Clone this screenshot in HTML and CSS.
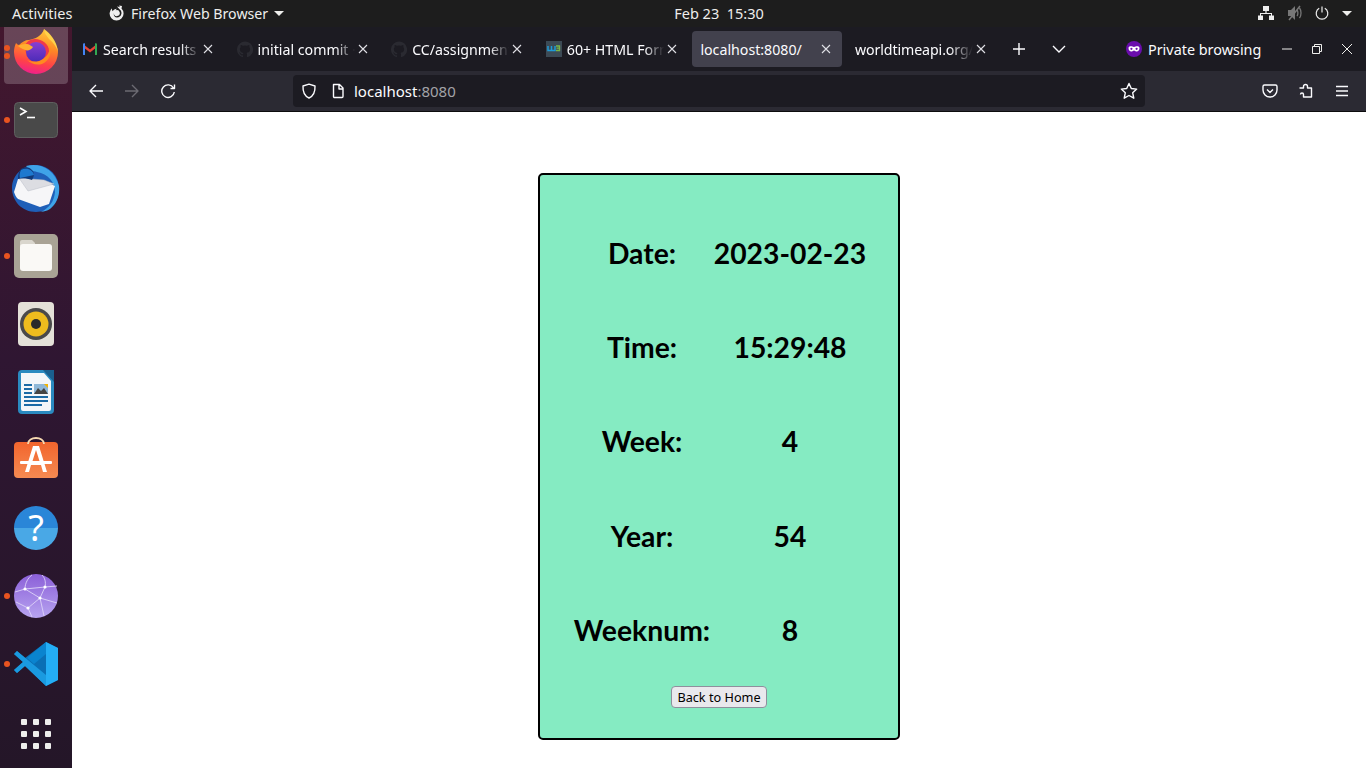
FILE: index.html
```html
<!DOCTYPE html>
<html lang="en">
<head>
<meta charset="utf-8">
<title>localhost:8080/</title>
<link rel="stylesheet" href="styles.css">
</head>
<body>
<div class="desktop">
  <header class="topbar">
    <span class="activities">Activities</span>
    <div class="appmenu">
      <svg class="app-icon" viewBox="0 0 16 16"><path fill="#eee" d="M8 1.500c1 0 2 .2 2.900.7L10 0.500l3 .5-.5 2.500A7 7 0 1 1 3 3.200C2.800 4.500 3 5.500 3.800 6.300 4.300 4.800 6 3.800 8 3.800c-.6.500-1.200 1-1.300 1.500a3 3 0 1 1-1.900 3C4.500 11 6 12.500 8 12.500a4.500 4.500 0 0 0 2.500-8.200"/></svg>
      <span class="appname">Firefox Web Browser</span>
      <i class="caret"></i>
    </div>
    <div class="clock">Feb 23&nbsp; 15:30</div>
    <div class="status">
      <svg class="st-net" viewBox="0 0 16 14"><path fill="#eee" d="M5 0h6v5H8.600v2H14v2.500h2V14h-5V9.500h2V8H3v1.500h2V14H0V9.500h2V7h5.400V5H5z"/></svg>
      <svg class="st-vol" viewBox="0 0 16 16"><path fill="#777" d="M1 5h3l4-4v14l-4-4H1z"/><path fill="none" stroke="#777" stroke-width="1.300" d="M10 5c1.200 1.500 1.200 4.500 0 6M12.500 3c2 2.500 2 7.500 0 10"/><path stroke="#777" stroke-width="1.500" d="M2 15L13 1"/></svg>
      <svg class="st-pow" viewBox="0 0 14 14"><path fill="none" stroke="#eee" stroke-width="1.200" d="M7 .5v6M4.200 2.300a5.800 5.800 0 1 0 5.600 0"/></svg>
      <i class="caret"></i>
    </div>
  </header>
  <div class="workspace">
    <nav class="dock">
      <div class="dock-item dock-first"><i class="dot dot-a"></i><i class="dot dot-b"></i>
        <svg class="ico" viewBox="0 0 48 48">
          <defs>
            <linearGradient id="fxa" x1="0.650" y1="0" x2="0.450" y2="1"><stop offset="0" stop-color="#ffc83a"/><stop offset="0.400" stop-color="#ff8a25"/><stop offset="0.750" stop-color="#ff4347"/><stop offset="1" stop-color="#f0208a"/></linearGradient>
            <linearGradient id="fxb" x1="0.500" y1="0" x2="0.500" y2="1"><stop offset="0" stop-color="#8a3fd0"/><stop offset="1" stop-color="#4a2bb8"/></linearGradient>
          </defs>
          <path fill="url(#fxa)" d="M32 1c1 4 4 7 7 10 4 4 7 8 7 13a22 22 0 1 1-44 0c0-3 .7-6 2-9 1 1 2 2 3 2 3-3 6-5 10-5 6-1 13-4 15-11z"/>
          <path fill="#ffd24a" d="M32 1c6 4 13 12 14 23-2-6-5-10-9-13-2-3-5-6-5-10z"/>
          <path fill="#f0384a" d="M23 11c-5 0-9 3-10 7 0 9 5 17 13 17 7 0 11-6 11-12 0-7-7-12-14-12z"/>
          <circle cx="24" cy="24" r="10" fill="url(#fxb)"/>
          <path fill="#ffb030" d="M6 18c3-1.500 7-2.500 11-1.500l4 2.500c-1.500 2-3.500 3.500-6 3.500-3-.5-6.500-2.500-9-4.500z"/>
          <path fill="#ff8a20" d="M38 18c2 8-1 15-8 18-6 1.500-11-.5-15-4 6 2.500 12 2 16-1 4-3 7-7 7-13z"/>
        </svg>
      </div>
      <div class="dock-item"><i class="dot"></i>
        <svg class="ico" viewBox="0 0 48 48"><rect x="2.500" y="6.500" width="43" height="35" rx="4" fill="#494949" stroke="#5f5f5f"/><path fill="none" stroke="#fff" stroke-width="1.600" d="M8 12l6 3.500L8 19"/><path stroke="#fff" stroke-width="1.600" d="M15 21.500h8"/></svg>
      </div>
      <div class="dock-item">
        <svg class="ico" viewBox="0 0 48 48">
          <path fill="#1f5fb8" d="M24 1a23.500 23.500 0 0 1 23 24c0 10-6 18-14 22l-9 1C10 48 0 37 0 24 0 11 11 1 24 1z"/>
          <path fill="#3fa3e8" d="M14 2c13-4 29 3 33 20 1 9-2 18-9 23-3 2-6 2-9 3 8-4 13-10 14-20 0-10-7-18-18-20-4-1-8-2-11-6z"/>
          <path fill="#f6f6f8" d="M6 15l26 2 11 5-6 18-9 3-22-8c-2-2-3-4-4-7z"/>
          <path fill="#dcdde2" stroke="#b9bcc6" stroke-width="0.500" d="M7 14l9 13 26-7-10-4z"/>
          <path fill="#123a78" d="M9 5c4-3 9-2 11 1 3 3 2 7 0 10-6-2-9-2-14-1 0-5 1-8 3-10z"/>
          <path fill="#1e79cf" d="M9 6c6-3 12 0 13 5L8 14c-1-3 0-6 1-8z"/>
        </svg>
      </div>
      <div class="dock-item"><i class="dot"></i>
        <svg class="ico" viewBox="0 0 48 48"><rect x="2" y="2" width="44" height="44" rx="5" fill="#a9a395"/><path fill="#d9d6cd" d="M8 10a2 2 0 0 1 2-2h10l3 3v3H8z"/><rect x="8" y="12" width="32" height="27" rx="3" fill="#faf9f6"/></svg>
      </div>
      <div class="dock-item">
        <svg class="ico" viewBox="0 0 48 48"><rect x="6" y="2" width="36" height="44" rx="4" fill="#e4e1d8"/><circle cx="24" cy="24" r="16" fill="#4a4a4a"/><circle cx="24" cy="24" r="12.500" fill="#eebc1e"/><circle cx="24" cy="24" r="5" fill="#2a2a2a"/></svg>
      </div>
      <div class="dock-item">
        <svg class="ico" viewBox="0 0 48 48"><path fill="#2a8ac0" d="M10 2h24l8 0v40a4 4 0 0 1-4 4H10a4 4 0 0 1-4-4V6a4 4 0 0 1 4-4z"/><path fill="#f3f6f9" d="M9 5h23l7 8v28a2 2 0 0 1-2 2H11a2 2 0 0 1-2-2z"/><path fill="#1a5f8e" d="M31 2h11v12z"/><path fill="#1a6aa6" d="M12 16h8v2h-8zM12 20h8v2h-8zM12 24h8v2h-8zM12 28h24v2H12zM12 32h24v2H12zM12 36h18v2H12z"/><rect x="22" y="16" width="14" height="10" fill="#8fb8d8"/><path fill="#444" d="M22 26l4-6 3 3 3-3 4 6z"/><path fill="#f4b400" d="M32 16h4v4z"/></svg>
      </div>
      <div class="dock-item">
        <svg class="ico" viewBox="0 0 48 48"><defs><linearGradient id="sw" x1="0" y1="0" x2="0" y2="1"><stop offset="0" stop-color="#f2652d"/><stop offset="1" stop-color="#f58a52"/></linearGradient></defs><rect x="2" y="6" width="44" height="36" rx="4" fill="url(#sw)"/><path fill="none" stroke="#f6d9b0" stroke-width="1.800" d="M16 8c0-8 16-8 16 0"/><path fill="#fff" d="M21 10h6l8 26h-4l-2-7H19l-2 7h-4zM24 14l-3.500 11h7z"/><rect x="8" y="25" width="32" height="3" rx="1" fill="#fff"/></svg>
      </div>
      <div class="dock-item">
        <div class="help">?</div>
      </div>
      <div class="dock-item"><i class="dot"></i>
        <svg class="ico" viewBox="0 0 48 48"><defs><linearGradient id="web" x1="0" y1="0" x2="0" y2="1"><stop offset="0" stop-color="#8b5fd8"/><stop offset="1" stop-color="#b7a4f0"/></linearGradient></defs><circle cx="24" cy="24" r="22" fill="url(#web)"/><path fill="none" stroke="#ddd2f7" stroke-width="0.900" d="M3 20l10-3 20-2 12-1M13 17l15 9 17 5M28 26L16 36l-12-6M16 36l4 9M13 17c0-6 3-11 7-14M33 15c1-5 0-9-3-12M33 15l-5 11 4 18"/><circle cx="13" cy="17" r="1.600" fill="#fff"/><circle cx="33" cy="15" r="1.600" fill="#fff"/><circle cx="28" cy="26" r="1.600" fill="#fff"/><circle cx="16" cy="36" r="1.600" fill="#fff"/></svg>
      </div>
      <div class="dock-item"><i class="dot"></i>
        <svg class="ico" viewBox="0 0 48 48"><path fill="#0a6fb5" d="M34 2L46 8v32l-12 6L13 26 5 33l-3-3 9-8-9-8 3-3 8 7z"/><path fill="#1a9ae0" d="M2 14l3-3 29 24v11L13 26l-8 7-3-3 9-8z"/><path fill="#0a84cf" d="M34 2v12L22 24l-7-6z"/><path fill="#24aef5" d="M34 2l12 6v32l-12 6z"/></svg>
      </div>
      <div class="dock-item">
        <div class="apps"><i></i><i></i><i></i><i></i><i></i><i></i><i></i><i></i><i></i></div>
      </div>
    </nav>
    <div class="browser">
      <div class="tabbar">
        <div class="tabs">
          <div class="tab">
            <svg class="fav" viewBox="0 0 16 16"><path fill="#ea4335" d="M1 3l7 5.500L15 3v3L8 11.500 1 6z"/><path fill="#4285f4" d="M1 3.500C1 2.500 2.200 2 3 2.600V14H1.500a.5.500 0 0 1-.5-.5z"/><path fill="#34a853" d="M15 3.500c0-1-1.200-1.500-2-.9V14h1.500a.5.500 0 0 0 .5-.5z"/></svg>
            <span class="label">Search results</span><svg class="x" viewBox="0 0 10 10"><path d="M1 1l8 8M9 1L1 9"/></svg>
          </div>
          <div class="tab">
            <svg class="fav" viewBox="0 0 16 16"><path fill="#2a2a31" d="M8 .5a8 8 0 0 0-2.500 15.600c.4 0 .5-.2.500-.4v-1.400c-2.200.5-2.700-1-2.700-1-.4-.9-.9-1.200-.9-1.200-.7-.5.100-.5.100-.5.800.1 1.200.8 1.200.8.700 1.200 1.900.9 2.300.7 0-.5.300-.9.500-1.100-1.800-.2-3.600-.9-3.600-3.900 0-.9.300-1.600.8-2.100-.1-.2-.4-1 .1-2.100 0 0 .7-.2 2.200.8a7.600 7.600 0 0 1 4 0c1.500-1 2.200-.8 2.200-.8.400 1.100.2 1.900.1 2.100.5.500.8 1.200.8 2.100 0 3-1.800 3.700-3.600 3.900.3.300.5.700.5 1.500v2.200c0 .2.100.5.600.4A8 8 0 0 0 8 .5z"/></svg>
            <span class="label">initial commit · </span><svg class="x" viewBox="0 0 10 10"><path d="M1 1l8 8M9 1L1 9"/></svg>
          </div>
          <div class="tab">
            <svg class="fav" viewBox="0 0 16 16"><path fill="#2a2a31" d="M8 .5a8 8 0 0 0-2.500 15.600c.4 0 .5-.2.500-.4v-1.400c-2.200.5-2.700-1-2.700-1-.4-.9-.9-1.200-.9-1.200-.7-.5.100-.5.100-.5.800.1 1.200.8 1.200.8.700 1.200 1.900.9 2.300.7 0-.5.300-.9.500-1.100-1.800-.2-3.600-.9-3.600-3.900 0-.9.300-1.600.8-2.100-.1-.2-.4-1 .1-2.100 0 0 .7-.2 2.200.8a7.600 7.600 0 0 1 4 0c1.500-1 2.200-.8 2.200-.8.400 1.100.2 1.900.1 2.100.5.500.8 1.200.8 2.100 0 3-1.800 3.700-3.600 3.900.3.300.5.700.5 1.500v2.200c0 .2.100.5.600.4A8 8 0 0 0 8 .5z"/></svg>
            <span class="label">CC/assignment</span><svg class="x" viewBox="0 0 10 10"><path d="M1 1l8 8M9 1L1 9"/></svg>
          </div>
          <div class="tab">
            <svg class="fav" viewBox="0 0 16 16"><rect width="16" height="16" fill="#3c4a55"/><path fill="none" stroke="#1e9bd7" stroke-width="1.500" d="M2 5v4.500h3.500V5M5.500 9.500H9V5"/><path fill="none" stroke="#7ab648" stroke-width="1.300" d="M10 5h3.500v4.500H10M10.500 7.200h3"/></svg>
            <span class="label">60+ HTML Forms</span><svg class="x" viewBox="0 0 10 10"><path d="M1 1l8 8M9 1L1 9"/></svg>
          </div>
          <div class="tab tab-active">
            <span class="label label-full">localhost:8080/</span><svg class="x" viewBox="0 0 10 10"><path d="M1 1l8 8M9 1L1 9"/></svg>
          </div>
          <div class="tab">
            <span class="label label-world">worldtimeapi.org/</span><svg class="x" viewBox="0 0 10 10"><path d="M1 1l8 8M9 1L1 9"/></svg>
          </div>
        </div>
        <svg class="tb-plus" viewBox="0 0 14 14"><path d="M7 1v12M1 7h12"/></svg>
        <svg class="tb-chev" viewBox="0 0 14 8"><path d="M1 1l6 6 6-6"/></svg>
        <div class="private">
          <svg class="mask" viewBox="0 0 16 16"><circle cx="8" cy="8" r="8" fill="#6a0dad"/><path fill="#fff" d="M2.500 7c0-1.200 1-1.700 2.300-1.700 1.200 0 2.200.6 3.200.6s2-.6 3.200-.6c1.300 0 2.300.5 2.300 1.700 0 2-1.200 3.600-2.800 3.600-1.300 0-1.800-1.200-2.700-1.200s-1.400 1.200-2.700 1.200C3.700 10.600 2.500 9 2.500 7z"/><circle cx="5.400" cy="7.800" r="1.100" fill="#6a0dad"/><circle cx="10.600" cy="7.800" r="1.100" fill="#6a0dad"/></svg>
          <span>Private browsing</span>
        </div>
        <div class="winctl">
          <svg viewBox="0 0 12 12"><path d="M1 6h10"/></svg>
          <svg viewBox="0 0 12 12"><path d="M3.500 3V1.500h7v7H8.500M1.500 3.500h7v7h-7z"/></svg>
          <svg viewBox="0 0 12 12"><path d="M1 1l10 10M11 1L1 11"/></svg>
        </div>
      </div>
      <div class="toolbar">
        <svg class="tl" viewBox="0 0 16 16"><path d="M15 8H2M8 2L2 8l6 6"/></svg>
        <svg class="tl tl-off" viewBox="0 0 16 16"><path d="M1 8h13M8 2l6 6-6 6"/></svg>
        <svg class="tl" viewBox="0 0 16 16"><path d="M13.500 5A6.300 6.300 0 1 0 14.300 9M14.500 1.500V5.500H10.500"/></svg>
        <div class="urlbar">
          <svg class="u-shield" viewBox="0 0 16 16"><path d="M8 1.200L14 3c.3 6-1.500 10-6 12C3.500 13 1.700 9 2 3z"/></svg>
          <svg class="u-page" viewBox="0 0 16 16"><path d="M3.500 1.500h6l3.500 3.500v8.500a1 1 0 0 1-1 1H4.500a1 1 0 0 1-1-1zM9 1.500V6h4"/></svg>
          <span class="url">localhost<span class="url-dim">:8080</span></span>
          <svg class="u-star" viewBox="0 0 18 18"><path d="M9 1.500l2.300 5 5.400.6-4 3.700 1.100 5.400L9 13.500l-4.800 2.700 1.100-5.400-4-3.700 5.400-.6z"/></svg>
        </div>
        <div class="tools">
          <svg viewBox="0 0 16 16"><path d="M2.500 2h11A1.500 1.500 0 0 1 15 3.500V7A7 7 0 0 1 1 7V3.500A1.500 1.500 0 0 1 2.500 2zM5 6.500l3 3 3-3"/></svg>
          <svg viewBox="0 0 16 16"><path d="M1.500 5h4V3.500a2 2 0 0 1 4 0V5h4v9h-8v-2.500a1.500 1.500 0 0 0-3 0"/></svg>
          <svg viewBox="0 0 16 16"><path d="M2 3.500h12M2 8h12M2 12.500h12"/></svg>
        </div>
      </div>
      <main class="page">
        <section class="card">
          <table class="info">
            <tr><th>Date:</th><td>2023-02-23</td></tr>
            <tr><th>Time:</th><td>15:29:48</td></tr>
            <tr><th>Week:</th><td>4</td></tr>
            <tr><th>Year:</th><td>54</td></tr>
            <tr><th>Weeknum:</th><td>8</td></tr>
          </table>
          <button class="home" type="button">Back to Home</button>
        </section>
      </main>
    </div>
  </div>
</div>
</body>
</html>
```

FILE: styles.css
```css
* { box-sizing: border-box; }
html, body { margin: 0; padding: 0; height: 100%; overflow: hidden; }
body { font-family: "Noto Sans", sans-serif; background: #fff; }
.desktop { width: 1366px; height: 768px; display: flex; flex-direction: column; }

.topbar { position: relative; z-index: 2; flex: 0 0 27px; height: 27px; padding-bottom: 1px; background: #1d1d1d; color: #eeeeec; font-size: 14.500px; display: flex; align-items: center; }
.activities { margin-left: 12px; width: 97px; }
.appmenu { display: flex; align-items: center; gap: 6px; width: 567px; }
.appname { font-size: 14.200px; }
.app-icon { width: 16px; height: 16px; }
.caret { display: block; width: 0; height: 0; border-left: 5px solid transparent; border-right: 5px solid transparent; border-top: 5px solid #eeeeec; }
.clock { width: 120px; text-align: center; margin-left: -17px; }
.status { margin-left: auto; display: flex; align-items: center; padding-right: 14px; }
.st-net { width: 16px; height: 14px; margin-right: 13px; }
.st-vol { width: 16px; height: 16px; margin-right: 12px; }
.st-pow { width: 14px; height: 14px; margin-right: 13px; }

.workspace { flex: 1; display: flex; min-height: 0; }
.dock { flex: 0 0 72px; width: 72px; overflow: hidden; background: linear-gradient(180deg, #43172e 0%, #2f1632 45%, #241628 100%); display: flex; flex-direction: column; }
.dock-item { position: relative; flex: 0 0 68px; height: 68px; display: flex; align-items: center; justify-content: center; }
.dock-first { margin-top: -9px; }
.dock-first::before { content: ""; position: absolute; left: 4px; top: 2px; width: 64px; height: 64px; border-radius: 4px; background: rgba(255,255,255,.2); }
.ico { position: relative; width: 48px; height: 48px; display: block; }
.dot { position: absolute; left: 4px; top: 31px; width: 6px; height: 6px; border-radius: 50%; background: #e95420; }
.dot-a { top: 27px; z-index: 1; }
.dot-b { top: 35px; z-index: 1; }
.help { width: 44px; height: 44px; border-radius: 50%; background: linear-gradient(180deg, #2a86d8 0 50%, #49a8e6 50% 100%); color: #fff; font: 400 36px/44px "Noto Sans", sans-serif; text-align: center; }
.apps { display: grid; grid-template-columns: repeat(3, 6px); gap: 6px; margin-top: 3px; }
.apps i { display: block; width: 6px; height: 6px; border-radius: 1px; background: #eeeeec; }

.browser { flex: 1; display: flex; flex-direction: column; min-width: 0; }
.tabbar { flex: 0 0 44px; height: 44px; background: #1c1b22; display: flex; align-items: center; color: #fbfbfe; font-size: 14.400px; }
.tabs { display: flex; gap: 4.600px; padding-left: 2px; font-size: 14.200px; }
.tab { flex: 0 0 150px; width: 150px; height: 36px; border-radius: 4px; padding: 0 8px; display: flex; align-items: center; }
.tab-active { background: #42414d; }
.fav { flex: 0 0 16px; width: 16px; height: 16px; margin-right: 5px; }
.label { flex: 1; min-width: 0; white-space: nowrap; overflow: hidden; -webkit-mask-image: linear-gradient(90deg, #000 80%, transparent 100%); mask-image: linear-gradient(90deg, #000 80%, transparent 100%); }
.label-full { -webkit-mask-image: none; mask-image: none; }
.label-world { letter-spacing: -0.100px; }
.x { flex: 0 0 10px; width: 10px; height: 10px; margin: 0 3px; }
.x path { fill: none; stroke: #e0e0e6; stroke-width: 1.100; }
.tb-plus { width: 14px; height: 14px; margin-left: 15px; }
.tb-plus path, .tb-chev path { fill: none; stroke: #fbfbfe; stroke-width: 1.400; }
.tb-chev { width: 14px; height: 8px; margin-left: 26px; }
.private { display: flex; align-items: center; gap: 6px; margin-left: 60px; }
.mask { width: 16px; height: 16px; }
.winctl { display: flex; align-items: center; gap: 18px; margin-left: 20px; }
.winctl svg { width: 12px; height: 12px; }
.winctl path { fill: none; stroke: #eeeeec; stroke-width: 1; }

.toolbar { flex: 0 0 41px; height: 41px; background: #2b2a33; border-bottom: 1px solid #0c0c0d; display: flex; align-items: center; padding: 0 16px; }
.tl { width: 16px; height: 16px; margin-right: 20px; flex: none; }
.tl path, .u-shield path, .u-page path, .u-star path, .tools path { fill: none; stroke: #fbfbfe; stroke-width: 1.400; stroke-linejoin: round; }
.tl-off path { stroke: #6c6b73; }
.urlbar { width: 852px; height: 32px; margin-left: 97px; border-radius: 4px; background: #1c1b22; display: flex; align-items: center; padding: 0 7px 0 8px; color: #fbfbfe; font-size: 15px; }
.u-shield, .u-page { width: 16px; height: 16px; }
.u-page { margin-left: 13px; }
.url { margin-left: 8px; }
.url-dim { color: #a3a3a8; }
.u-star { width: 18px; height: 18px; margin-left: auto; }
.tools { display: flex; gap: 20px; margin-left: 117px; }
.tools svg { width: 16px; height: 16px; }

.page { flex: 1; background: #fff; display: flex; justify-content: center; align-items: flex-start; padding: 61px 0 0 0; min-height: 0; }
.card { width: 362px; height: 567px; border: 2px solid #000; border-radius: 5px; background: #85ebc2; padding-top: 31px; display: flex; flex-direction: column; align-items: center; }
.info { border-collapse: collapse; font: 700 28.300px "Lato", sans-serif; color: #000; white-space: nowrap; }
.info th, .info td { height: 94.200px; padding: 0; text-align: center; font-weight: 700; }
.info th { width: 142px; }
.info td { width: 154px; }
.home { width: 96px; height: 22px; margin-top: 9.500px; padding: 0; font: 12.700px "Noto Sans", sans-serif; color: #000; background: #e9e9ed; border: 1px solid #8f8f9d; border-radius: 4px; }
```
